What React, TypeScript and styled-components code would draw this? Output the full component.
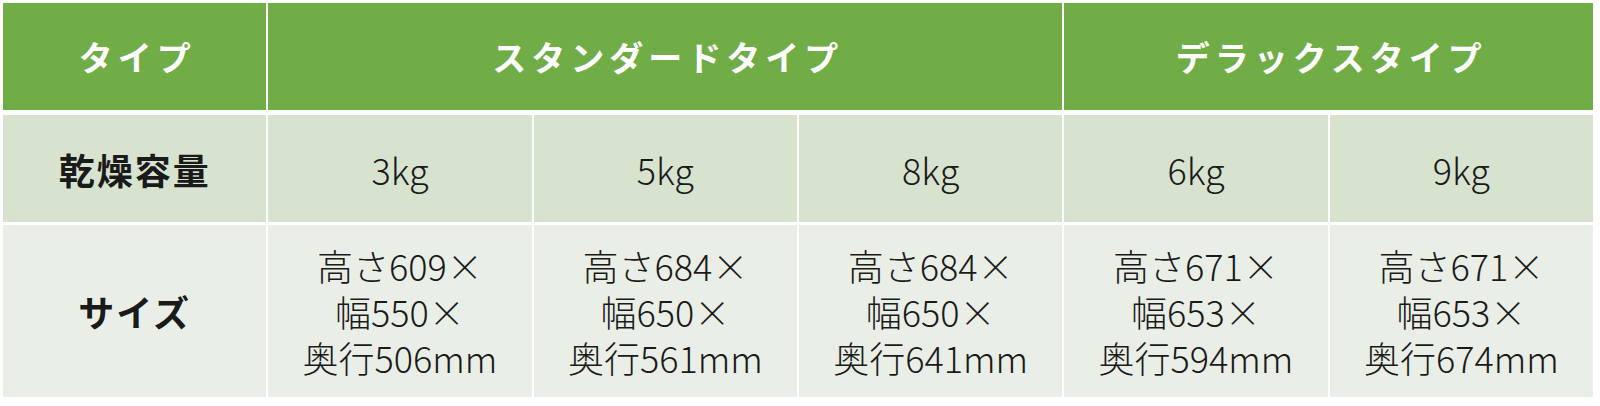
import styled, { createGlobalStyle } from "styled-components";

const GlobalStyle = createGlobalStyle`
  body {
    margin: 0;
    background: #ffffff;
    font-family: "Noto Sans CJK JP", "Noto Sans", sans-serif;
  }
`;

type Tone = "head" | "mid" | "light";

const toneBg: Record<Tone, string> = {
  head: "#70ad47",
  mid: "#d7e3cf",
  light: "#e9efe6",
};

const Table = styled.div`
  display: flex;
  flex-direction: column;
  gap: 3px;
  width: 1590px;
  padding: 3px;
`;

const Row = styled.div<{ height: number; gapBelow?: number }>`
  display: grid;
  grid-template-columns: repeat(6, 1fr);
  column-gap: 2px;
  height: ${({ height }) => height}px;
  margin-bottom: ${({ gapBelow = 0 }) => gapBelow}px;
`;

const Cell = styled.div<{ tone: Tone; span?: number }>`
  grid-column: span ${({ span = 1 }) => span};
  background: ${({ tone }) => toneBg[tone]};
  display: flex;
  align-items: center;
  justify-content: center;
  text-align: center;
  color: ${({ tone }) => (tone === "head" ? "#ffffff" : "#1a1a1a")};
`;

const HeadText = styled.span`
  font-size: 34px;
  font-weight: 700;
  letter-spacing: 5px;
  padding-left: 5px;
`;

const Label = styled.span`
  font-size: 36px;
  font-weight: 700;
  letter-spacing: 2px;
`;

const Value = styled.span`
  font-size: 36px;
  font-weight: 300;
`;

const Size = styled.span`
  font-size: 36px;
  font-weight: 300;
  line-height: 46px;
  white-space: pre-line;
`;

const capacities = ["3kg", "5kg", "8kg", "6kg", "9kg"];

const sizes = [
  ["609", "550", "506"],
  ["684", "650", "561"],
  ["684", "650", "641"],
  ["671", "653", "594"],
  ["671", "653", "674"],
];

export default function App() {
  return (
    <>
      <GlobalStyle />
      <Table>
        <Row height={107} gapBelow={2}>
          <Cell tone="head">
            <HeadText>タイプ</HeadText>
          </Cell>
          <Cell tone="head" span={3}>
            <HeadText>スタンダードタイプ</HeadText>
          </Cell>
          <Cell tone="head" span={2}>
            <HeadText>デラックスタイプ</HeadText>
          </Cell>
        </Row>
        <Row height={107}>
          <Cell tone="mid">
            <Label>乾燥容量</Label>
          </Cell>
          {capacities.map((c) => (
            <Cell tone="mid" key={c}>
              <Value>{c}</Value>
            </Cell>
          ))}
        </Row>
        <Row height={172}>
          <Cell tone="light">
            <Label>サイズ</Label>
          </Cell>
          {sizes.map(([h, w, d], idx) => (
            <Cell tone="light" key={idx}>
              <Size>{`高さ${h}×\n幅${w}×\n奥行${d}mm`}</Size>
            </Cell>
          ))}
        </Row>
      </Table>
    </>
  );
}
